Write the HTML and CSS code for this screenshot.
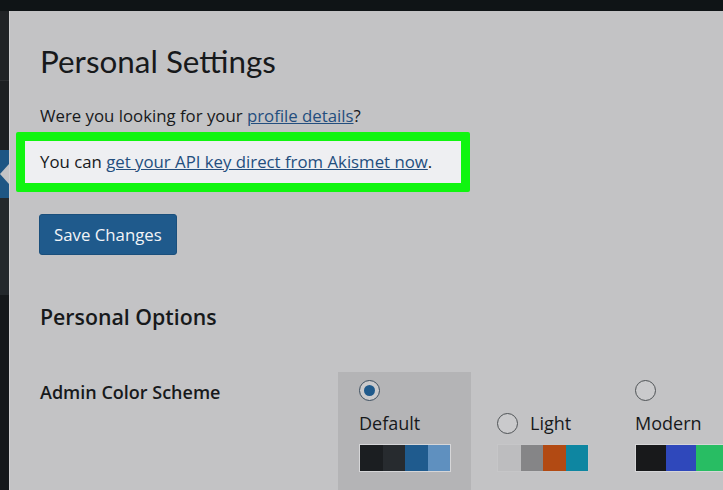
FILE: index.html
```html
<!DOCTYPE html>
<html lang="en">
<head>
  <meta charset="UTF-8">
  <meta name="viewport" content="width=device-width, initial-scale=1.0">
  <title>Personal Settings</title>
  <link rel="stylesheet" href="styles.css">
</head>
<body>
  <div class="topbar"></div>
  <div class="layout">
    <div class="sidebar">
      <div class="menu menu-top"></div>
      <div class="menu menu-mid"></div>
      <div class="menu menu-current"><span class="arrow"></span></div>
      <div class="menu menu-sub"></div>
      <div class="menu menu-rest"></div>
    </div>

    <div class="main">
      <h1>Personal Settings</h1>
      <p class="intro">Were you looking for your <a href="#">profile details</a>?</p>

      <div class="highlight">
        <div class="notice">You can <a href="#">get your API key direct from Akismet now</a>.</div>
      </div>

      <button type="button" class="save">Save Changes</button>

      <h2>Personal Options</h2>

      <div class="field">
        <div class="field-label">Admin Color Scheme</div>
        <div class="schemes">
          <div class="scheme selected">
            <span class="radio checked"></span>
            <div class="scheme-name">Default</div>
            <div class="swatches">
              <span class="sw" style="background:#1b1e21"></span>
              <span class="sw" style="background:#272b2f"></span>
              <span class="sw" style="background:#1f5b8e"></span>
              <span class="sw" style="background:#5f90bf"></span>
            </div>
          </div>
          <div class="scheme inline">
            <div class="scheme-name"><span class="radio"></span>Light</div>
            <div class="swatches light">
              <span class="sw" style="background:#bdbdbf"></span>
              <span class="sw" style="background:#858587"></span>
              <span class="sw" style="background:#b24a13"></span>
              <span class="sw" style="background:#0e86a1"></span>
            </div>
          </div>
          <div class="scheme">
            <span class="radio"></span>
            <div class="scheme-name">Modern</div>
            <div class="swatches">
              <span class="sw" style="background:#18191b"></span>
              <span class="sw" style="background:#2f48bb"></span>
              <span class="sw" style="background:#28bd63"></span>
            </div>
          </div>
        </div>
      </div>
    </div>
  </div>
</body>
</html>
```

FILE: styles.css
```css
body {
  margin: 0;
  padding: 0;
  font-family: "Open Sans", Lato, sans-serif;
  background-color: #c3c3c5;
  color: #17191b;
  height: 490px;
  overflow: hidden;
}
.topbar {
  height: 11px;
  background: #0f1416;
}
.layout {
  display: flex;
  height: 479px;
}
.sidebar {
  width: 9px;
  flex-shrink: 0;
  display: flex;
  flex-direction: column;
  background: #15181b;
  border-right: 1px solid #d0d0d2;
}
.menu-top {
  height: 69px;
  background: #202326;
  border-bottom: 1px solid #2b2e31;
}
.menu-mid {
  height: 69px;
  background: #1c1f22;
}
.menu-current {
  position: relative;
  height: 48px;
  background: #1e5684;
}
.arrow {
  position: absolute;
  right: 0;
  top: 14px;
  width: 0;
  height: 0;
  border-top: 10px solid transparent;
  border-bottom: 10px solid transparent;
  border-right: 9px solid #c3c3c5;
}
.menu-sub {
  height: 97px;
  background: #23282c;
}
.menu-rest {
  flex: 1;
  background: #15181b;
}
.main {
  flex: 1;
  padding: 0 0 0 30px;
}
h1 {
  margin: 28px 0 0;
  font-family: Lato, sans-serif;
  font-size: 31.4px;
  font-weight: 400;
  line-height: 44px;
}
a {
  color: #234e7e;
}
.intro {
  margin: 21px 0 0;
  font-size: 16.8px;
  line-height: 24px;
}
.highlight {
  margin: 4px 0 0 -24px;
  width: 436px;
  padding: 9px;
  background: #10f510;
  border-radius: 2px;
}
.notice {
  background: #eeeff2;
  padding: 9px 15px;
  font-size: 16.8px;
  line-height: 24px;
}
.save {
  display: block;
  margin: 22px 0 0 -1px;
  padding: 0 14px;
  height: 41px;
  background: #1f5a8c;
  color: #f2f4f7;
  border: 1px solid #1a4f7c;
  border-radius: 3px;
  font-family: inherit;
  font-size: 16.8px;
}
h2 {
  margin: 47px 0 0;
  font-size: 21.3px;
  font-weight: 600;
  line-height: 30px;
}
.field {
  display: flex;
  margin-top: 40px;
}
.field-label {
  width: 298px;
  padding-top: 8px;
  font-size: 18px;
  font-weight: 600;
}
.schemes {
  display: flex;
  gap: 5px;
}
.scheme {
  width: 112px;
  flex-shrink: 0;
  padding: 8px 0 20px 21px;
  font-size: 18px;
}
.scheme.inline {
  padding-top: 38px;
}
.scheme.selected {
  background: #b4b4b6;
}
.radio {
  display: block;
  box-sizing: border-box;
  width: 21px;
  height: 21px;
  border: 1px solid #4f5356;
  border-radius: 50%;
  background: #cacacc;
  position: relative;
  flex-shrink: 0;
}
.radio.checked {
  border-color: #3d4f60;
}
.radio.checked::after {
  content: "";
  position: absolute;
  left: 4px;
  top: 4px;
  width: 11px;
  height: 11px;
  border-radius: 50%;
  background: #1f5a8c;
}
.scheme-name {
  margin-top: 9px;
  line-height: 26px;
  display: flex;
  align-items: center;
  gap: 12px;
}
.scheme.inline .scheme-name {
  margin-top: 0;
}
.swatches {
  display: flex;
  box-sizing: border-box;
  margin-top: 8px;
  width: 92px;
  height: 28px;
  border: 1px solid #d6d6d8;
}
.swatches.light {
  border-color: #c6c6c8;
}
.sw {
  flex: 1;
}
```
